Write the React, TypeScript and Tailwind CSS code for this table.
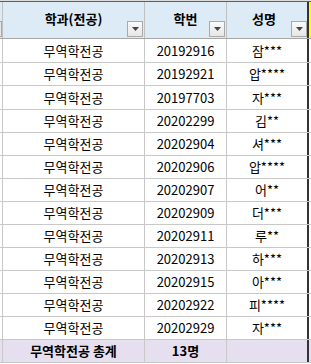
const rows = [
  { dept: '무역학전공', id: '20192916', name: '잠***' },
  { dept: '무역학전공', id: '20192921', name: '압****' },
  { dept: '무역학전공', id: '20197703', name: '자***' },
  { dept: '무역학전공', id: '20202299', name: '김**' },
  { dept: '무역학전공', id: '20202904', name: '셔***' },
  { dept: '무역학전공', id: '20202906', name: '압****' },
  { dept: '무역학전공', id: '20202907', name: '어**' },
  { dept: '무역학전공', id: '20202909', name: '더***' },
  { dept: '무역학전공', id: '20202911', name: '루**' },
  { dept: '무역학전공', id: '20202913', name: '하***' },
  { dept: '무역학전공', id: '20202915', name: '아***' },
  { dept: '무역학전공', id: '20202922', name: '피****' },
  { dept: '무역학전공', id: '20202929', name: '자***' },
];

// a few rows are 1px taller, like the sheet's zoom rounding
const tallRows = [0, 2];

function FilterButton({ className }: { className: string }) {
  return (
    <div
      className={`absolute flex h-[16px] w-[16px] items-center justify-center border border-[#a9a9a9] bg-gradient-to-b from-[#fafafa] to-[#e6e6e6] ${className}`}
    >
      <svg width="7" height="4" viewBox="0 0 7 4">
        <path d="M0 0h7L3.5 4z" fill="#454545" />
      </svg>
    </div>
  );
}

export default function App() {
  return (
    <div
      className="h-[364px] w-[311px] overflow-hidden bg-white text-[13px] text-black"
      style={{ fontFamily: '"Noto Sans CJK KR", "Noto Sans", sans-serif' }}
    >
      {/* top edge */}
      <div className="h-px bg-[#dcdcdc]" />
      <div className="h-px bg-[#5f5f5f]" />

      {/* Header */}
      <div className="flex h-[37px] border-b border-[#a6a6a6] bg-[#ddebf7] font-bold">
        <div className="relative w-[3px] border-r border-[#c0c0c0]">
          <div className="absolute bottom-[1px] left-0 h-[16px] w-[2px] border-y border-r border-[#a9a9a9] bg-[#e6e6e6]" />
        </div>
        <div className="relative flex w-[142px] items-center justify-center border-r border-[#c0c0c0] pb-[2px]">
          학과(전공)
          <FilterButton className="bottom-[1px] right-[1px]" />
        </div>
        <div className="relative flex w-[82px] items-center justify-center border-r border-[#c0c0c0] pb-[2px]">
          학번
          <FilterButton className="bottom-[1px] right-[1px]" />
        </div>
        <div className="relative flex w-[82px] items-center justify-center border-r-2 border-[#333333] pb-[2px] pr-[6px]">
          성명
          <FilterButton className="bottom-[1px] right-0" />
        </div>
        <div className="w-[2px] bg-[#ffff00]" />
      </div>

      {/* Data rows */}
      {rows.map((r, i) => (
        <div
          key={r.id}
          className={`flex border-b border-[#c8c8c8] ${tallRows.includes(i) ? 'h-[24px]' : 'h-[23px]'}`}
        >
          <div className="w-[3px] border-r border-[#c8c8c8]" />
          <div className="flex w-[142px] items-center justify-center border-r border-[#c8c8c8]">{r.dept}</div>
          <div className="flex w-[82px] items-center justify-center border-r border-[#c8c8c8]">{r.id}</div>
          <div className="flex w-[82px] items-center justify-center border-r-2 border-[#333333]">{r.name}</div>
          <div className="w-[2px]" />
        </div>
      ))}

      {/* Summary */}
      <div className="flex h-[23px] border-b border-[#c8c8c8] bg-[#e6dff0] font-bold">
        <div className="w-[3px] border-r border-[#c8c8c8]" />
        <div className="flex w-[142px] items-center justify-center border-r border-[#c8c8c8]">무역학전공 총계</div>
        <div className="flex w-[82px] items-center justify-center border-r border-[#c8c8c8]">13명</div>
        <div className="w-[82px] border-r-2 border-[#333333]" />
        <div className="w-[2px]" />
      </div>
    </div>
  );
}
